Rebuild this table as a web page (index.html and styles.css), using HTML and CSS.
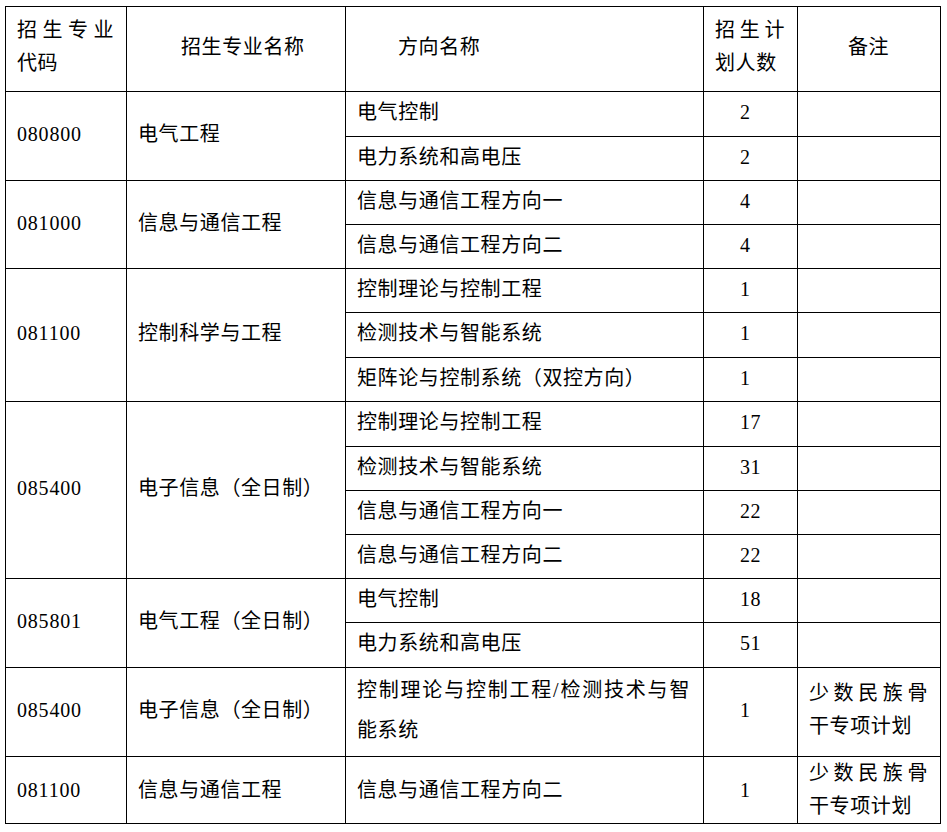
FILE: index.html
```html
<!DOCTYPE html>
<html lang="zh-CN">
<head>
<meta charset="utf-8">
<title>招生计划</title>
<link rel="stylesheet" href="styles.css">
</head>
<body>
<table class="plan">
  <colgroup>
    <col class="c1"><col class="c2"><col class="c3"><col class="c4"><col class="c5">
  </colgroup>
  <tr class="h85">
    <td class="just lh33">招生专业代码</td>
    <td class="namehead">招生专业名称</td>
    <td class="dirhead">方向名称</td>
    <td class="just lh33">招生计划人数</td>
    <td class="center">备注</td>
  </tr>
  <tr class="h45">
    <td class="code" rowspan="2">080800</td>
    <td rowspan="2">电气工程</td>
    <td>电气控制</td>
    <td class="num">2</td>
    <td></td>
  </tr>
  <tr class="h44">
    <td>电力系统和高电压</td>
    <td class="num">2</td>
    <td></td>
  </tr>
  <tr class="h44">
    <td class="code" rowspan="2">081000</td>
    <td rowspan="2">信息与通信工程</td>
    <td>信息与通信工程方向一</td>
    <td class="num">4</td>
    <td></td>
  </tr>
  <tr class="h44">
    <td>信息与通信工程方向二</td>
    <td class="num">4</td>
    <td></td>
  </tr>
  <tr class="h44">
    <td class="code" rowspan="3">081100</td>
    <td rowspan="3">控制科学与工程</td>
    <td>控制理论与控制工程</td>
    <td class="num">1</td>
    <td></td>
  </tr>
  <tr class="h45">
    <td>检测技术与智能系统</td>
    <td class="num">1</td>
    <td></td>
  </tr>
  <tr class="h44">
    <td>矩阵论与控制系统（双控方向）</td>
    <td class="num">1</td>
    <td></td>
  </tr>
  <tr class="h45">
    <td class="code" rowspan="4">085400</td>
    <td rowspan="4">电子信息（全日制）</td>
    <td>控制理论与控制工程</td>
    <td class="num">17</td>
    <td></td>
  </tr>
  <tr class="h44">
    <td>检测技术与智能系统</td>
    <td class="num">31</td>
    <td></td>
  </tr>
  <tr class="h44">
    <td>信息与通信工程方向一</td>
    <td class="num">22</td>
    <td></td>
  </tr>
  <tr class="h44">
    <td>信息与通信工程方向二</td>
    <td class="num">22</td>
    <td></td>
  </tr>
  <tr class="h44">
    <td class="code" rowspan="2">085801</td>
    <td rowspan="2">电气工程（全日制）</td>
    <td>电气控制</td>
    <td class="num">18</td>
    <td></td>
  </tr>
  <tr class="h45">
    <td>电力系统和高电压</td>
    <td class="num">51</td>
    <td></td>
  </tr>
  <tr class="h89">
    <td class="code">085400</td>
    <td>电子信息（全日制）</td>
    <td class="just lh40 dirwide">控制理论与控制工程/检测技术与智能系统</td>
    <td class="num">1</td>
    <td class="just lh33">少数民族骨干专项计划</td>
  </tr>
  <tr class="h67">
    <td class="code">081100</td>
    <td>信息与通信工程</td>
    <td>信息与通信工程方向二</td>
    <td class="num">1</td>
    <td class="just lh33">少数民族骨干专项计划</td>
  </tr>
</table>
</body>
</html>
```
FILE: styles.css
```css
html, body {
  margin: 0;
  padding: 0;
  background: #ffffff;
}

body {
  padding: 6px 0 0 5px;
  font-family: "Liberation Serif", "Noto Sans CJK SC", serif;
  font-size: 20px;
  color: #000000;
}

.plan {
  border-collapse: collapse;
  table-layout: fixed;
  width: 936px;
}

.c1 { width: 121px; }
.c2 { width: 219px; }
.c3 { width: 358px; }
.c4 { width: 94px; }
.c5 { width: 143px; }

.plan td {
  border: 1px solid #000000;
  padding: 0 12px 4px 11px;
  vertical-align: middle;
  line-height: 26px;
  letter-spacing: 0.6px;
  text-align: left;
  overflow: hidden;
}

.h85 { height: 85px; }
.h89 { height: 89px; }
.h67 { height: 67px; }
.h45 { height: 45px; }
.h44 { height: 44px; }

.plan .h67 td {
  padding-bottom: 0;
}

.plan td.code {
  padding-left: 11px;
  letter-spacing: 0.8px;
}

.plan td.num {
  padding-left: 36px;
}

.plan td.center {
  text-align: center;
}

.plan td.namehead {
  padding-left: 54px;
}

.plan td.dirhead {
  padding-left: 52px;
}

.plan td.just {
  text-align: justify;
}

.plan td.lh33 { line-height: 33px; }
.plan td.lh40 { line-height: 40px; }

.plan td.dirwide {
  padding-right: 13px;
}
```
